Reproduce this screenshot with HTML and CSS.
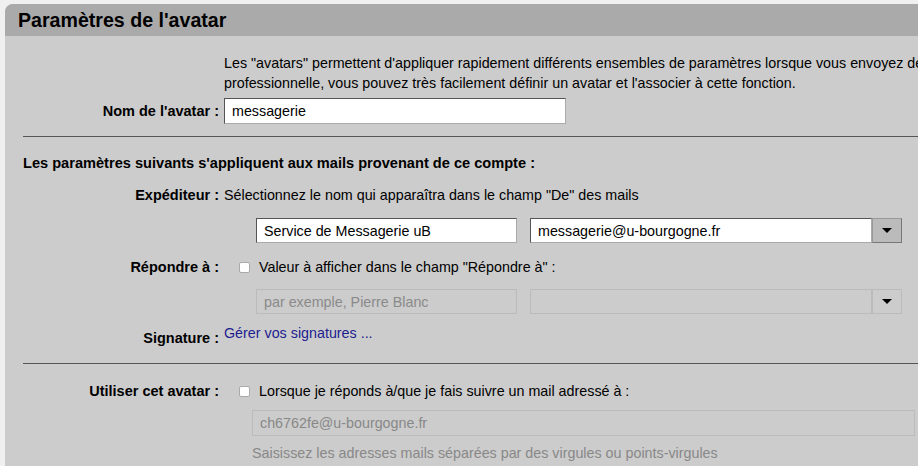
FILE: index.html
```html
<!DOCTYPE html>
<html lang="fr">
<head>
    <meta charset="UTF-8">
    <title>Paramètres de l'avatar</title>
    <link rel="stylesheet" href="styles.css">
</head>
<body>
    <div class="panel">
        <h1 class="panel-title">Paramètres de l'avatar</h1>

        <div class="panel-body">
            <div class="row">
                <div class="label"></div>
                <p class="intro">Les "avatars" permettent d'appliquer rapidement différents ensembles de paramètres lorsque vous envoyez des mails depuis une adresse personnelle ou<br>professionnelle, vous pouvez très facilement définir un avatar et l'associer à cette fonction.</p>
            </div>

            <div class="row row-input">
                <div class="label">Nom de l'avatar :</div>
                <div><input class="field field-name" type="text" value="messagerie"></div>
            </div>

            <div class="separator"></div>

            <div class="section-title">Les paramètres suivants s'appliquent aux mails provenant de ce compte :</div>

            <div class="row row-sender">
                <div class="label">Expéditeur :</div>
                <div>Sélectionnez le nom qui apparaîtra dans le champ "De" des mails</div>
            </div>

            <div class="pair">
                <input class="field field-short" type="text" value="Service de Messagerie uB">
                <div class="combo">
                    <input class="field field-combo" type="text" value="messagerie@u-bourgogne.fr">
                    <span class="combo-button"><span class="arrow"></span></span>
                </div>
            </div>

            <div class="row row-reply">
                <div class="label">Répondre à :</div>
                <div class="check-line"><span class="check"></span>Valeur à afficher dans le champ "Répondre à" :</div>
            </div>

            <div class="pair pair-disabled">
                <input class="field field-short" type="text" placeholder="par exemple, Pierre Blanc" disabled>
                <div class="combo">
                    <input class="field field-combo" type="text" disabled>
                    <span class="combo-button"><span class="arrow"></span></span>
                </div>
            </div>

            <div class="row row-signature">
                <div class="label label-low">Signature :</div>
                <div><a class="link" href="#">Gérer vos signatures ...</a></div>
            </div>

            <div class="separator separator-low"></div>

            <div class="row row-use">
                <div class="label">Utiliser cet avatar :</div>
                <div class="check-line"><span class="check"></span>Lorsque je réponds à/que je fais suivre un mail adressé à :</div>
            </div>

            <div class="addresses">
                <input class="field field-wide" type="text" value="ch6762fe@u-bourgogne.fr" disabled>
                <div class="hint">Saisissez les adresses mails séparées par des virgules ou points-virgules</div>
            </div>
        </div>
    </div>
</body>
</html>
```

FILE: styles.css
```css
body {
    margin: 0;
    background-color: #f0f0f0;
    font-family: "Liberation Sans", Arial, sans-serif;
    font-size: 14.3px;
    line-height: 20px;
    color: #000;
    overflow: hidden;
}
.panel {
    width: 1100px;
    margin: 4px 0 0 5px;
    background-color: #cccccc;
    border-top-left-radius: 8px;
    height: 470px;
}
.panel-title {
    margin: 0;
    height: 32px;
    line-height: 32px;
    padding-left: 13px;
    background-color: #aaaaaa;
    border-top-left-radius: 8px;
    font-size: 19.6px;
    font-weight: bold;
}
.panel-body {
    padding: 17px 0 0 18px;
}
.row {
    display: grid;
    grid-template-columns: 196px 1fr;
    column-gap: 5px;
    align-items: center;
}
.label {
    text-align: right;
    font-size: 14.5px;
    font-weight: bold;
    white-space: nowrap;
}
.intro {
    margin: 0;
    white-space: nowrap;
}
.row-input {
    margin-top: 5px;
}
.field {
    box-sizing: border-box;
    height: 26px;
    margin: 0;
    padding: 0 7px;
    font-family: "Liberation Sans", Arial, sans-serif;
    font-size: 14.3px;
    color: #000;
    background-color: #fff;
    border: 1px solid;
    border-color: #555 #aaa #aaa #555;
    outline: none;
}
.field-name {
    display: block;
    width: 342px;
}
.separator {
    margin-top: 12px;
    border-top: 1px solid #555;
}
.section-title {
    margin-top: 16px;
    font-size: 14.6px;
    font-weight: bold;
    white-space: nowrap;
}
.row-sender {
    margin-top: 12px;
}
.pair {
    display: flex;
    gap: 13px;
    margin: 13px 0 0 233px;
}
.pair .field {
    height: 25px;
}
.field-short {
    width: 261px;
}
.combo {
    display: flex;
}
.field-combo {
    width: 342px;
}
.combo-button {
    box-sizing: border-box;
    width: 30px;
    height: 25px;
    display: flex;
    align-items: center;
    justify-content: center;
    background-color: #bbbbbb;
    border: 1px solid;
    border-color: #999 #777 #777 #999;
}
.arrow {
    width: 0;
    height: 0;
    border-left: 5px solid transparent;
    border-right: 5px solid transparent;
    border-top: 5px solid #000;
}
.pair-disabled {
    margin-top: 12px;
}
.pair-disabled .field {
    background-color: #cccccc;
    border-color: #bbb;
    color: #888;
}
.pair-disabled .field::placeholder {
    color: #8a8a8a;
}
.pair-disabled .combo-button {
    background-color: #cccccc;
    border-color: #bbb;
}
.row-reply {
    margin-top: 14px;
}
.check-line {
    display: flex;
    align-items: center;
    white-space: nowrap;
}
.check {
    box-sizing: border-box;
    width: 11px;
    height: 11px;
    margin: 0 9px 0 15px;
    background-color: #fff;
    border: 1px solid #aaa;
    border-radius: 2px;
}
.row-signature {
    margin-top: 9px;
    align-items: start;
}
.label-low {
    padding-top: 5px;
}
.link {
    color: #1c1c8f;
    text-decoration: none;
}
.separator-low {
    margin-top: 15px;
}
.row-use {
    margin-top: 17px;
}
.addresses {
    margin: 9px 0 0 229px;
}
.field-wide {
    display: block;
    width: 663px;
    background-color: #cccccc;
    border-color: #bbb;
    color: #888;
}
.hint {
    margin-top: 7px;
    color: #888;
    white-space: nowrap;
}
```
